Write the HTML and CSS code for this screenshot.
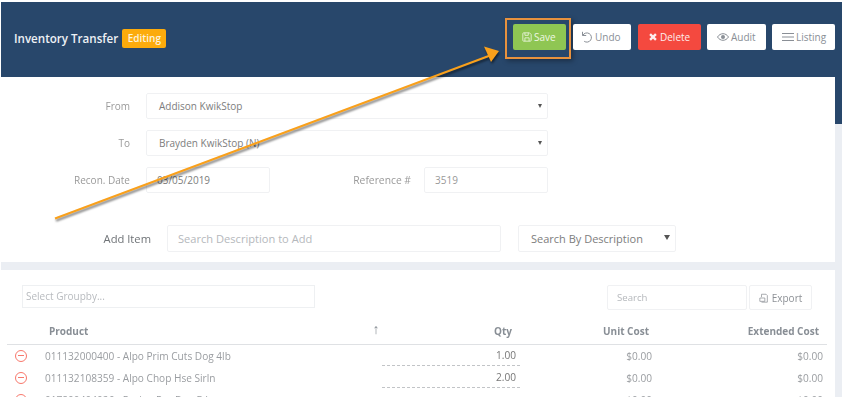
FILE: index.html
```html
<!DOCTYPE html>
<html lang="en">
<head>
<meta charset="utf-8">
<title>Inventory Transfer</title>
<link rel="stylesheet" href="styles.css">
</head>
<body>
<div class="page">
  <header class="topbar">
    <div class="title-wrap">
      <h1 class="title">Inventory Transfer</h1>
      <span class="badge">Editing</span>
    </div>
    <div class="actions">
      <span class="highlight">
        <button class="btn btn-save">
          <svg class="ico" viewBox="0 0 12 12"><path d="M2 1h7l2 2v7a1 1 0 0 1-1 1H2a1 1 0 0 1-1-1V2a1 1 0 0 1 1-1z M3.500 1v3h4V1 M3.500 11V7h5v4" fill="none" stroke="currentColor"/></svg>Save
        </button>
      </span>
      <button class="btn btn-undo">
        <svg class="ico ico-l" viewBox="0 0 12 12"><path d="M1.500 .8v3.700h3.700 M1.800 4.300a4.600 4.600 0 1 1 1.400 6" fill="none" stroke="currentColor" stroke-width="1"/></svg>Undo
      </button>
      <button class="btn btn-delete">
        <svg class="ico" viewBox="0 0 12 12"><path d="M2.500 2.500l7 7M9.500 2.500l-7 7" fill="none" stroke="currentColor" stroke-width="2.800"/></svg>Delete
      </button>
      <button class="btn btn-audit">
        <svg class="ico ico-l" viewBox="0 0 12 12"><path d="M.5 6c2.800-4.400 8.200-4.400 11 0c-2.800 4.400-8.200 4.400-11 0z" fill="none" stroke="currentColor"/><circle cx="6" cy="6" r="2" fill="currentColor"/></svg>Audit
      </button>
      <button class="btn btn-listing">
        <svg class="ico ico-l" viewBox="0 0 12 12"><path d="M0 2.500h12M0 6h12M0 9.500h12" fill="none" stroke="currentColor"/></svg>Listing
      </button>
    </div>
  </header>

  <div class="body-row">
    <div class="main">
      <section class="panel form-panel">
        <div class="form-row">
          <label class="lbl">From</label>
          <div class="field select wide">Addison KwikStop<span class="caret"></span></div>
        </div>
        <div class="form-row">
          <label class="lbl">To</label>
          <div class="field select wide">Brayden KwikStop (N)<span class="caret"></span></div>
        </div>
        <div class="form-row">
          <label class="lbl">Recon. Date</label>
          <div class="field date">03/05/2019</div>
          <label class="lbl lbl-ref">Reference #</label>
          <div class="field ref">3519</div>
        </div>
        <div class="form-row add-row">
          <label class="lbl lbl-add">Add Item</label>
          <div class="field add-input">Search Description to Add</div>
          <div class="field add-select">Search By Description<span class="caret caret-big"></span></div>
        </div>
      </section>

      <section class="panel table-panel">
        <div class="tools">
          <div class="groupby">Select Groupby...</div>
          <div class="search">Search</div>
          <button class="export">
            <svg class="ico" viewBox="0 0 12 12"><path d="M3 5V1.500h5.500l1.500 1.500v8H3 M1 6h6v4H1z" fill="none" stroke="currentColor" stroke-width=".9"/></svg>Export
          </button>
        </div>
        <table class="grid">
          <thead>
            <tr>
              <th class="c-rm"></th>
              <th class="c-prod">Product</th>
              <th class="c-sort">&#8593;</th>
              <th class="c-qty">Qty</th>
              <th class="c-unit">Unit Cost</th>
              <th class="c-ext">Extended Cost</th>
            </tr>
          </thead>
          <tbody>
            <tr>
              <td class="c-rm"><span class="rm"></span></td>
              <td class="c-prod">011132000400 - Alpo Prim Cuts Dog 4lb</td>
              <td class="c-sort"></td>
              <td class="c-qty"><span class="qty">1.00</span></td>
              <td class="c-unit">$0.00</td>
              <td class="c-ext">$0.00</td>
            </tr>
            <tr>
              <td class="c-rm"><span class="rm"></span></td>
              <td class="c-prod">011132108359 - Alpo Chop Hse Sirln</td>
              <td class="c-sort"></td>
              <td class="c-qty"><span class="qty">2.00</span></td>
              <td class="c-unit">$0.00</td>
              <td class="c-ext">$0.00</td>
            </tr>
            <tr>
              <td class="c-rm"><span class="rm"></span></td>
              <td class="c-prod">017800404026 - Purina Pro Dog Fd</td>
              <td class="c-sort"></td>
              <td class="c-qty"></td>
              <td class="c-unit">$0.00</td>
              <td class="c-ext">$0.00</td>
            </tr>
          </tbody>
        </table>
      </section>
    </div>
  </div>

  <svg class="arrow" viewBox="0 0 842 402" width="842" height="402">
    <g class="arrow-art">
      <path d="M55 218.500L490 55.500" stroke="#f9a01b" stroke-width="2" fill="none"/>
      <path d="M499 51L484 46.500L491 62z" fill="#f9a01b"/>
    </g>
  </svg>
</div>
</body>
</html>
```
FILE: styles.css
```css
* { box-sizing: border-box; }
html, body { margin: 0; padding: 0; }
body {
  width: 842px;
  height: 402px;
  overflow: hidden;
  background: #fff;
  font-family: "Open Sans", "Noto Sans", sans-serif;
  font-size: 10px;
  color: #777;
}
.page {
  position: relative;
  width: 842px;
  height: 397px;
  padding-top: 2px;
  overflow: hidden;
  filter: blur(0.45px);
}
.topbar {
  height: 122px;
  margin-left: 1px;
  margin-bottom: -47px;
  padding: 16px 7px 0 13px;
  background: #28476b;
  display: flex;
  justify-content: space-between;
  align-items: flex-start;
}
.title-wrap { display: flex; align-items: center; gap: 4px; margin-top: 11px; }
.title { margin: 0; font-size: 11.6px; font-weight: 600; color: #eef1f5; line-height: 19px; }
.badge {
  background: #fcab0c;
  color: #fdf3dc;
  font-size: 10px;
  font-weight: 600;
  line-height: 19px;
  padding: 0 5.500px;
  border-radius: 2px;
}
.actions { display: flex; align-items: flex-start; gap: 6px; margin-top: 6px; }
.highlight {
  display: block;
  padding: 4px 3px 7px 6px;
  margin: -6px -4px 0 0;
  border: 2px solid #e8923e;
  box-shadow: 2px 2px 5px rgba(0,0,0,.35);
}
.btn {
  height: 26px;
  border: 0;
  border-radius: 2px;
  padding: 0 0 0 10px;
  display: flex;
  align-items: center;
  justify-content: flex-start;
  gap: 2px;
  font: 400 10px "Open Sans", "Noto Sans", sans-serif;
  background: #fff;
  color: #8a8f96;
}
.btn-save { width: 53px; padding-left: 9px; background: #8fc653; color: #eef7e3; }
.btn-undo { width: 58px; padding-left: 8px; margin-right: 1px; }
.btn-delete { width: 63px; background: #f4493f; color: #fdeeed; }
.btn-audit { width: 59px; }
.btn-listing { width: 63px; }
.ico { width: 10px; height: 10px; flex: none; }
.ico-l { width: 12px; height: 12px; }
.body-row {
  position: relative;
  height: 320px;
  margin-left: 1px;
  background: linear-gradient(transparent 47px, #ebeef3 47px);
}
.main { width: 834px; }
.panel { background: #fff; }
.form-panel { height: 185px; padding-top: 16px; }
.form-row { display: flex; align-items: center; height: 26px; margin-bottom: 11px; }
.lbl { width: 145px; padding-right: 16px; text-align: right; color: #9a9a9a; font-size: 10px; flex: none; }
.field {
  position: relative;
  height: 26px;
  line-height: 24px;
  border: 1px solid #f0f1f3;
  border-radius: 2px;
  background: #fff;
  color: #7d7d7d;
  font-size: 10px;
}
.select.wide { width: 402px; padding-left: 12px; }
.date { width: 124px; padding-left: 10px; }
.lbl-ref { width: 154px; padding-right: 13px; font-size: 10.300px; }
.ref { width: 124px; padding-left: 10px; color: #999; }
.caret {
  position: absolute;
  right: 5px;
  top: 10px;
  border-style: solid;
  border-width: 4px 2.500px 0;
  border-color: #555 transparent transparent;
}
.caret-big { right: 5px; top: 9px; border-width: 5px 3px 0; }
.add-row { margin-top: 32px; margin-bottom: 0; height: 27px; }
.lbl-add { width: 150px; padding-right: 0; margin-right: 16px; color: #6f7377; font-size: 11.200px; }
.add-input { width: 334px; height: 27px; line-height: 26px; padding-left: 10px; font-size: 11.100px; color: #b5b8bc; }
.add-select {
  width: 158px;
  height: 27px;
  line-height: 26px;
  margin-left: 17px;
  padding-left: 12px;
  font-size: 11px;
  color: #7d7d7d;
}
.table-panel { margin-top: 8px; height: 127px; padding-top: 15px; }
.tools { display: flex; align-items: flex-start; padding-left: 21px; height: 25px; }
.groupby {
  width: 293px;
  height: 23px;
  line-height: 21px;
  border: 1px solid #eef0f2;
  padding-left: 3px;
  font-size: 10px;
  color: #b8bbbf;
}
.search {
  width: 140px;
  height: 25px;
  line-height: 24px;
  margin-left: 292px;
  border: 1px solid #f0f1f3;
  border-radius: 2px;
  padding-left: 9px;
  font-size: 9.600px;
  color: #b5b8bc;
}
.export {
  width: 63px;
  height: 25px;
  margin-left: 2px;
  border: 1px solid #f0f1f3;
  border-radius: 2px;
  background: #fff;
  display: inline-flex;
  align-items: center;
  justify-content: center;
  gap: 3px;
  font: 400 10px "Open Sans", "Noto Sans", sans-serif;
  color: #8d9196;
  padding: 0;
}
.grid {
  width: 820px;
  margin-left: 6px;
  margin-top: 7px;
  border-collapse: collapse;
  table-layout: fixed;
  font-size: 10.100px;
}
.grid th {
  height: 27px;
  font-size: 10px;
  font-weight: 700;
  color: #888e95;
  border-bottom: 1px solid #dfe1e4;
  padding: 2px 0 0;
}
.grid td { height: 22.500px; padding: 0; color: #9a9da1; }
.c-rm { width: 38px; text-align: left; }
.c-prod { width: 318px; text-align: left; }
.grid th.c-prod { padding-left: 4px; }
.c-sort { width: 26px; text-align: center; font-size: 11px; }
.grid th.c-sort { font-weight: 400; font-size: 14px; padding: 0 0 4px; }
.c-qty { width: 123px; text-align: right; }
.c-unit { width: 140px; text-align: right; }
.grid th.c-unit { padding-right: 3px; }
.c-ext { width: 175px; text-align: right; }
.grid td.c-ext { padding-right: 4px; }
.grid th.c-ext { padding-right: 8px; }
.rm {
  display: block;
  position: relative;
  width: 12px;
  height: 12px;
  margin-left: 8px;
  border: 1px solid #f8786c;
  border-radius: 50%;
}
.rm::after {
  content: "";
  position: absolute;
  left: 2px;
  right: 2px;
  top: 4px;
  height: 1px;
  background: #f8786c;
}
.qty {
  display: block;
  width: 138px;
  margin-left: -7px;
  padding: 1px 4px 0 0;
  border-bottom: 1px dashed #c2c4c7;
  color: #777;
  line-height: 19px;
}
.arrow { position: absolute; left: 0; top: 0; pointer-events: none; }
.arrow-art { filter: drop-shadow(1px 2px 1.2px rgba(0,0,0,.55)); }
```
